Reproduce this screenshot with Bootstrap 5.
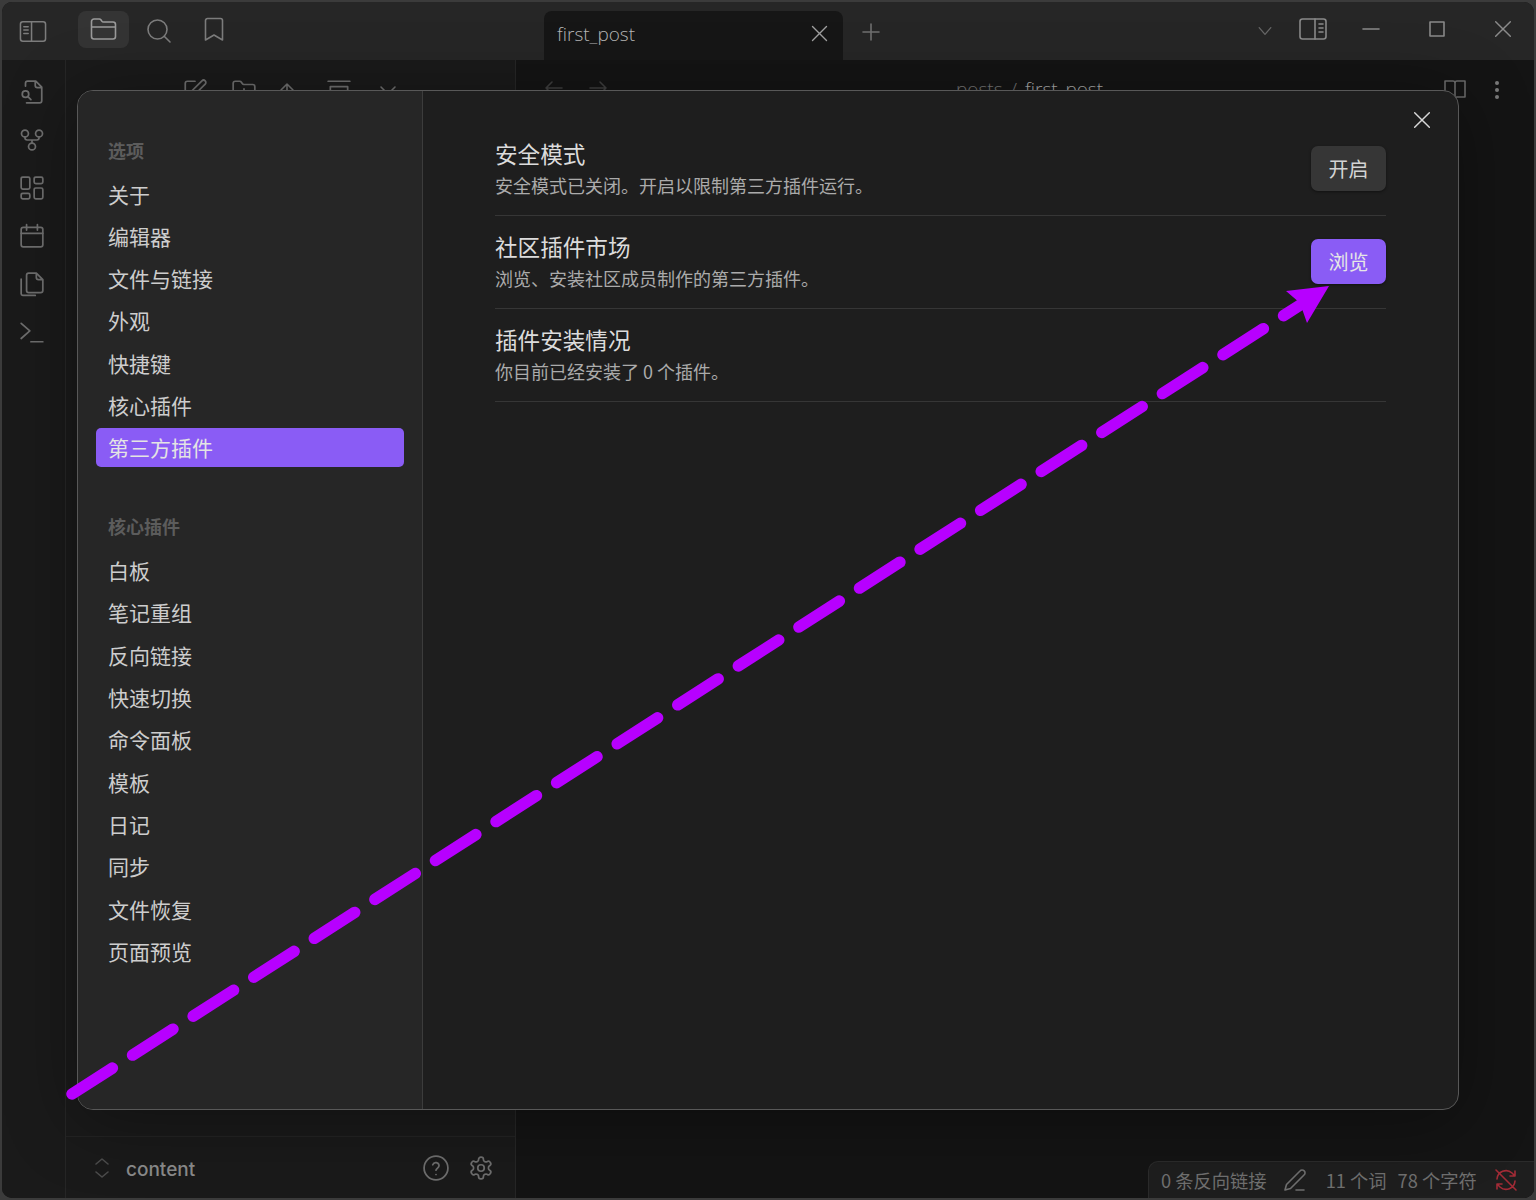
<!DOCTYPE html>
<html lang="zh">
<head>
  <meta charset="UTF-8" />
  <meta name="viewport" content="width=device-width, initial-scale=1.0"/>
  <title>第三方插件</title>
  <link href="https://cdn.jsdelivr.net/npm/bootstrap@5.3.3/dist/css/bootstrap.min.css" rel="stylesheet">
  <style>
    html, body { height: 100%; }
    body {
      background: #3b3b3b;
      font-family: "Noto Sans CJK SC", "Liberation Sans", sans-serif;
      overflow: hidden;
      padding: 2px;
    }
    .ico { fill: none; stroke: currentColor; stroke-width: 1.6; stroke-linecap: round; stroke-linejoin: round; display: block; }
    .app-frame { height: 1196px; border-radius: 10px; overflow: hidden; background: #141414; }
    .title-bar { height: 58px; background: #262626; color: #7c7c7c; flex: none; }
    .title-left { width: 542px; padding-left: 17px; padding-bottom: 4px; }
    .tb-btn { width: 28px; height: 37px; }
    .tb-active { width: 51px; margin-left: 31px; background: #343434; border-radius: 8px; color: #9a9a9a; }
    .tb-wide { width: 60px; }
    .tb-book { width: 50px; }
    .file-tab {
      width: 299px; height: 49px; margin-top: 9px; background: #161616; border-radius: 8px 8px 0 0;
      padding: 0 13px 4px 13px; color: #b5b5b5; font: 300 19px "Open Sans", sans-serif;
    }
    .plus-btn { margin-left: 16px; margin-top: 2px; color: #707070; }
    .win-ctl { margin-right: -2px; padding-bottom: 4px; color: #8a8a8a; }
    .ctl-cell { width: 66px; }
    .ctl-side { width: 30px; margin-right: 10px; }
    .main-area { min-height: 0; }
    .ribbon { width: 64px; background: #1a1a1a; border-right: 1px solid #262626; padding-top: 8px; color: #6e6e6e; flex: none; }
    .rib-btn { height: 48px; width: 60px; }
    .files-pane { width: 450px; background: #1a1a1a; border-right: 1px solid #262626; color: #6e6e6e; flex: none; }
    .files-tools { padding: 18px 0 0 116px; gap: 23px; }
    .vault-bar { height: 62px; border-top: 1px solid #232323; padding: 0 21px 0 28px; }
    .vault-name { font: 500 19px "Inter", "Liberation Sans", sans-serif; color: #8a8a8a; margin-left: 16px; padding-top: 3px; }
    .doc-pane { background: #141414; color: #6a6a6a; }
    .doc-head { padding: 18px 34px 0 28px; height: 60px; }
    .crumb { font: 300 19px "Open Sans", sans-serif; color: #747474; line-height: 22px; margin-left: 348px; }
    .crumb b { font-weight: 300; color: #a8a8a8; }
    .dots-ico { margin-left: 27px; margin-top: 2px; fill: #7a7a7a; }
    .status-pill {
      right: 0; bottom: 0; height: 37px; width: 386px; background: #1e1e1e;
      border-top: 1px solid #2b2b2b; border-left: 1px solid #2b2b2b; border-radius: 10px 0 0 0;
      padding-left: 12px; color: #6f6f6f; font-size: 18.3px; line-height: 1;
    }
    .status-pill span { white-space: nowrap; }
    .set-modal {
      left: 75px; top: 88px; width: 1382px; height: 1020px;
      border: 1px solid #585858; border-radius: 16px; background: #1e1e1e; overflow: hidden;
      box-shadow: 0 10px 70px rgba(0,0,0,.35);
    }
    .set-side { width: 345px; background: #262626; border-right: 1px solid #3c3c3c; padding: 47px 18px 0 18px; flex: none; }
    .set-head { font-size: 18px; font-weight: 700; line-height: 24px; color: #5c5c5c; padding-left: 12px; margin-bottom: 12.5px; }
    .set-head-2 { margin-top: 47px; margin-bottom: 12.5px; }
    .set-link { height: 39px; line-height: 38.5px; padding: 0 12px; margin-bottom: 3.33px; border-radius: 5px; font-size: 21px; color: #cdcdcd; }
    .set-on { background: #8a5cf5; color: #e4e4e4; }
    .set-body { padding: 32px 72px 0 72px; }
    .set-row { height: 93px; border-bottom: 1px solid #363636; }
    .set-text { margin-bottom: 4px; }
    .set-title { font-size: 22.6px; line-height: 30px; color: #dcdcdc; margin-top: 2px; }
    .set-desc { font-size: 18px; line-height: 26px; color: #ababab; margin-top: 3px; }
    .set-btn { width: 75px; height: 45px; padding: 2px 0 0; margin-bottom: 2px; font-size: 20px; line-height: 1; border: 0; border-radius: 7px; box-shadow: 0 1px 3px rgba(0,0,0,.45); }
    .set-btn-plain, .set-btn-plain:hover { background: #363636; color: #d4d4d4; }
    .set-btn-accent, .set-btn-accent:hover { background: #8a5cf5; color: #e6e6e6; }
    .set-close { right: 25px; top: 18px; color: #d8d8d8; }
    .arrow-layer { left: 0; top: 0; pointer-events: none; }
  </style>
</head>
<body>
  <svg width="0" height="0" class="position-absolute">
    <defs>
      <symbol id="i-x" viewBox="0 0 24 24"><path d="M4 4l16 16M20 4L4 20"/></symbol>
      <symbol id="i-chev" viewBox="0 0 24 24"><path d="M5 8l7 8 7-8"/></symbol>
    </defs>
  </svg>

  <div class="app-frame d-flex flex-column position-relative">
    <div class="title-bar d-flex">
      <div class="title-left d-flex align-items-center">
        <div class="tb-btn d-flex align-items-center justify-content-center mt-1">
          <svg class="ico" width="29" height="25" viewBox="0 0 29 25"><rect x="1.5" y="2.5" width="26" height="20" rx="2.5"/><path d="M13 2.5v20M5 7.5h4.5M5 11h4.5M5 14.500h4.500"/></svg>
        </div>
        <div class="tb-btn tb-active d-flex align-items-center justify-content-center">
          <svg class="ico" width="27" height="24" viewBox="0 0 27 24" stroke-width="2"><path d="M4 22h19a2.500 2.500 0 0 0 2.500-2.500V7.500A2.500 2.500 0 0 0 23 5H13.500a2 2 0 0 1-1.700-.9l-.9-1.300A2 2 0 0 0 9.200 2H4A2.500 2.500 0 0 0 1.500 4.500v15A2.500 2.500 0 0 0 4 22zM1.500 10h24"/></svg>
        </div>
        <div class="tb-btn tb-wide d-flex align-items-center justify-content-center mt-1">
          <svg class="ico" width="26" height="26" viewBox="0 0 26 26"><circle cx="11.500" cy="11.500" r="9.500"/><path d="M24 24l-5.800-5.800"/></svg>
        </div>
        <div class="tb-btn tb-book d-flex align-items-center justify-content-center">
          <svg class="ico" width="20" height="25" viewBox="0 0 20 25"><path d="M18.500 23l-8.500-5-8.500 5V3.500a2 2 0 0 1 2-2h13a2 2 0 0 1 2 2z"/></svg>
        </div>
      </div>
      <div class="file-tab d-flex align-items-center justify-content-between">
        <span>first_post</span>
        <svg class="ico" width="21" height="21" style="color:#a0a0a0"><use href="#i-x"/></svg>
      </div>
      <div class="plus-btn d-flex align-items-center">
        <svg class="ico" width="24" height="24" viewBox="0 0 24 24"><path d="M12 4v16M4 12h16"/></svg>
      </div>
      <div class="win-ctl ms-auto d-flex align-items-center">
        <div class="ctl-cell d-flex justify-content-center mt-1"><svg class="ico" width="20" height="20" style="color:#666"><use href="#i-chev"/></svg></div>
        <div class="ctl-side d-flex justify-content-center">
          <svg class="ico" width="28" height="24" viewBox="0 0 28 24"><rect x="1" y="2" width="26" height="20" rx="2.500"/><path d="M16 2v20M20 7h4M20 11h4M20 15h4"/></svg>
        </div>
        <div class="ctl-cell d-flex justify-content-center"><svg class="ico" width="18" height="18" viewBox="0 0 18 18"><path d="M1 9h16"/></svg></div>
        <div class="ctl-cell d-flex justify-content-center"><svg class="ico" width="18" height="18" viewBox="0 0 18 18"><rect x="2" y="2" width="14" height="14"/></svg></div>
        <div class="ctl-cell d-flex justify-content-center"><svg class="ico" width="22" height="22" stroke-width="1.800"><use href="#i-x"/></svg></div>
      </div>
    </div>

    <div class="main-area d-flex flex-grow-1">
      <div class="ribbon d-flex flex-column align-items-start">
        <div class="rib-btn d-flex align-items-center justify-content-center">
          <svg class="ico" width="26" height="26" viewBox="0 0 24 24"><path d="M6 6.500V4a2 2 0 0 1 2-2h7.500L21 7.500V20a2 2 0 0 1-2 2H7M15 2v4a2 2 0 0 0 2 2h4"/><circle cx="6" cy="14" r="3"/><path d="M11 19l-2.800-2.800"/></svg>
        </div>
        <div class="rib-btn d-flex align-items-center justify-content-center">
          <svg class="ico" width="26" height="26" viewBox="0 0 24 24"><circle cx="5.500" cy="6" r="3.200"/><circle cx="18.500" cy="6" r="3.200"/><circle cx="12" cy="18" r="3.200"/><path d="M5.500 9.200v.8a2 2 0 0 0 2 2h9a2 2 0 0 0 2-2v-.8M12 12v2.800"/></svg>
        </div>
        <div class="rib-btn d-flex align-items-center justify-content-center">
          <svg class="ico" width="26" height="26" viewBox="0 0 24 24"><rect x="2" y="2" width="8" height="11" rx="1.500"/><rect x="14" y="2" width="8" height="6" rx="1.500"/><rect x="14" y="12" width="8" height="10" rx="1.500"/><rect x="2" y="17" width="8" height="5" rx="1.500"/></svg>
        </div>
        <div class="rib-btn d-flex align-items-center justify-content-center">
          <svg class="ico" width="26" height="26" viewBox="0 0 24 24"><rect x="2" y="4" width="20" height="18" rx="2"/><path d="M7 1.500v5M17 1.500v5M2 9.500h20"/></svg>
        </div>
        <div class="rib-btn d-flex align-items-center justify-content-center">
          <svg class="ico" width="26" height="26" viewBox="0 0 24 24"><path d="M7 4a2 2 0 0 1 2-2h7l6 6v10a2 2 0 0 1-2 2H9a2 2 0 0 1-2-2zM16 2v4a2 2 0 0 0 2 2h4"/><path d="M2 7.500V21a1.500 1.500 0 0 0 1.500 1.500H15"/></svg>
        </div>
        <div class="rib-btn d-flex align-items-center justify-content-center">
          <svg class="ico" width="26" height="26" viewBox="0 0 24 24"><path d="M2 4l8 7-8 7M11 21h11"/></svg>
        </div>
      </div>

      <div class="files-pane d-flex flex-column justify-content-between">
        <div class="files-tools d-flex">
          <svg class="ico" width="26" height="26" viewBox="0 0 24 24"><path d="M12 3H5a2 2 0 0 0-2 2v14a2 2 0 0 0 2 2h14a2 2 0 0 0 2-2v-7"/><path d="M18.400 2.600a2.100 2.100 0 1 1 3 3L12 15l-4 1 1-4z"/></svg>
          <svg class="ico" width="26" height="26" viewBox="0 0 24 24"><path d="M4 20h16a2 2 0 0 0 2-2V8a2 2 0 0 0-2-2h-8a2 2 0 0 1-1.600-.9l-.8-1.200A2 2 0 0 0 8 3H4a2 2 0 0 0-2 2v13a2 2 0 0 0 2 2zM12 10v6M9 13h6"/></svg>
          <svg class="ico" width="22" height="26" viewBox="0 0 22 24" style="margin-left:-4px"><path d="M11 20V5M5 11l6-6 6 6"/></svg>
          <svg class="ico" width="26" height="26" viewBox="0 0 24 24" style="margin-left:5px"><path d="M2 3h20M4 8h16v12H4z"/></svg>
          <svg class="ico" width="20" height="26" viewBox="0 0 20 24" style="margin-left:3px"><path d="M3 8l7 7 7-7"/></svg>
        </div>
        <div class="vault-bar d-flex align-items-center">
          <svg class="ico" width="16" height="22" viewBox="0 0 16 22" stroke-width="1.400" style="color:#4c4c4c"><path d="M2 7l6-5 6 5M2 15l6 5 6-5"/></svg>
          <span class="vault-name">content</span>
          <svg class="ico ms-auto" width="26" height="26" viewBox="0 0 24 24"><circle cx="12" cy="12" r="11"/><path d="M9 9a3 3 0 0 1 5.800 1c0 2-2.800 2.500-2.800 4M12 18h.01"/></svg>
          <svg class="ico" width="26" height="26" viewBox="0 0 24 24" style="margin-left:19px"><path d="M12.220 2h-.44a2 2 0 0 0-2 2v.18a2 2 0 0 1-1 1.730l-.43.25a2 2 0 0 1-2 0l-.15-.08a2 2 0 0 0-2.730.73l-.22.38a2 2 0 0 0 .73 2.730l.15.1a2 2 0 0 1 1 1.720v.51a2 2 0 0 1-1 1.740l-.15.09a2 2 0 0 0-.73 2.730l.22.38a2 2 0 0 0 2.730.73l.15-.08a2 2 0 0 1 2 0l.43.25a2 2 0 0 1 1 1.730V20a2 2 0 0 0 2 2h.44a2 2 0 0 0 2-2v-.18a2 2 0 0 1 1-1.730l.43-.25a2 2 0 0 1 2 0l.15.08a2 2 0 0 0 2.730-.73l.22-.39a2 2 0 0 0-.73-2.730l-.15-.08a2 2 0 0 1-1-1.740v-.5a2 2 0 0 1 1-1.740l.15-.09a2 2 0 0 0 .73-2.730l-.22-.38a2 2 0 0 0-2.730-.73l-.15.08a2 2 0 0 1-2 0l-.43-.25a2 2 0 0 1-1-1.730V4a2 2 0 0 0-2-2z"/><circle cx="12" cy="12" r="3"/></svg>
        </div>
      </div>

      <div class="doc-pane flex-grow-1">
        <div class="doc-head d-flex align-items-start">
          <svg class="ico" width="20" height="20" viewBox="0 0 20 20" style="color:#3e3e3e"><path d="M18 10H2M8 4l-6 6 6 6"/></svg>
          <svg class="ico ms-4" width="20" height="20" viewBox="0 0 20 20" style="color:#3e3e3e"><path d="M2 10h16M12 4l6 6-6 6"/></svg>
          <div class="crumb">posts<span class="mx-2">/</span><b>first_post</b></div>
          <svg class="ico ms-auto" width="24" height="24" viewBox="0 0 24 24"><path d="M12 5a2 2 0 0 0-2-2H2v16h8a2 2 0 0 1 2 2 2 2 0 0 1 2-2h8V3h-8a2 2 0 0 0-2 2zM12 5v16"/></svg>
          <svg class="dots-ico" width="6" height="20" viewBox="0 0 6 20"><circle cx="3" cy="3" r="2"/><circle cx="3" cy="10" r="2"/><circle cx="3" cy="17" r="2"/></svg>
        </div>
      </div>
    </div>

    <div class="status-pill position-absolute d-flex align-items-center">
      <span>0 条反向链接</span>
      <svg class="ico" width="24" height="24" viewBox="0 0 24 24" style="margin-left:16px"><path d="M17 3a2.850 2.830 0 1 1 4 4L7.500 20.500 2 22l1.500-5.500zM13 22h8"/></svg>
      <span style="margin-left:19px">11 个词</span>
      <span style="margin-left:11px">78 个字符</span>
      <svg class="ico" width="24" height="24" viewBox="0 0 24 24" style="margin-left:17px;color:#a22b36" stroke-width="2"><path d="M3 11a9 9 0 0 1 15-6l3 3V3M21 13a9 9 0 0 1-15 6l-3-3v5M2 2l20 20M21 8h-5M3 16h5"/></svg>
    </div>

    <div class="set-modal position-absolute d-flex">
      <div class="set-side">
        <div class="set-head">选项</div>
        <div class="set-link">关于</div>
        <div class="set-link">编辑器</div>
        <div class="set-link">文件与链接</div>
        <div class="set-link">外观</div>
        <div class="set-link">快捷键</div>
        <div class="set-link">核心插件</div>
        <div class="set-link set-on">第三方插件</div>
        <div class="set-head set-head-2">核心插件</div>
        <div class="set-link">白板</div>
        <div class="set-link">笔记重组</div>
        <div class="set-link">反向链接</div>
        <div class="set-link">快速切换</div>
        <div class="set-link">命令面板</div>
        <div class="set-link">模板</div>
        <div class="set-link">日记</div>
        <div class="set-link">同步</div>
        <div class="set-link">文件恢复</div>
        <div class="set-link">页面预览</div>
      </div>
      <div class="set-body flex-grow-1">
        <div class="set-row d-flex align-items-center justify-content-between">
          <div class="set-text">
            <div class="set-title">安全模式</div>
            <div class="set-desc">安全模式已关闭。开启以限制第三方插件运行。</div>
          </div>
          <button type="button" class="btn set-btn set-btn-plain">开启</button>
        </div>
        <div class="set-row d-flex align-items-center justify-content-between">
          <div class="set-text">
            <div class="set-title">社区插件市场</div>
            <div class="set-desc">浏览、安装社区成员制作的第三方插件。</div>
          </div>
          <button type="button" class="btn set-btn set-btn-accent">浏览</button>
        </div>
        <div class="set-row d-flex align-items-center justify-content-between">
          <div class="set-text">
            <div class="set-title">插件安装情况</div>
            <div class="set-desc">你目前已经安装了 0 个插件。</div>
          </div>
        </div>
      </div>
      <svg class="ico set-close position-absolute" width="22" height="22" stroke-width="2.600"><use href="#i-x"/></svg>
    </div>
  </div>

  <svg class="arrow-layer position-absolute" width="1536" height="1200" viewBox="0 0 1536 1200">
    <path d="M72 1094L1308 300" fill="none" stroke="#b700ff" stroke-width="11.500" stroke-linecap="round" stroke-dasharray="48 24"/>
    <path d="M1329 286L1286 291L1300 303L1307 323Z" fill="#b700ff"/>
  </svg>
</body>
</html>
